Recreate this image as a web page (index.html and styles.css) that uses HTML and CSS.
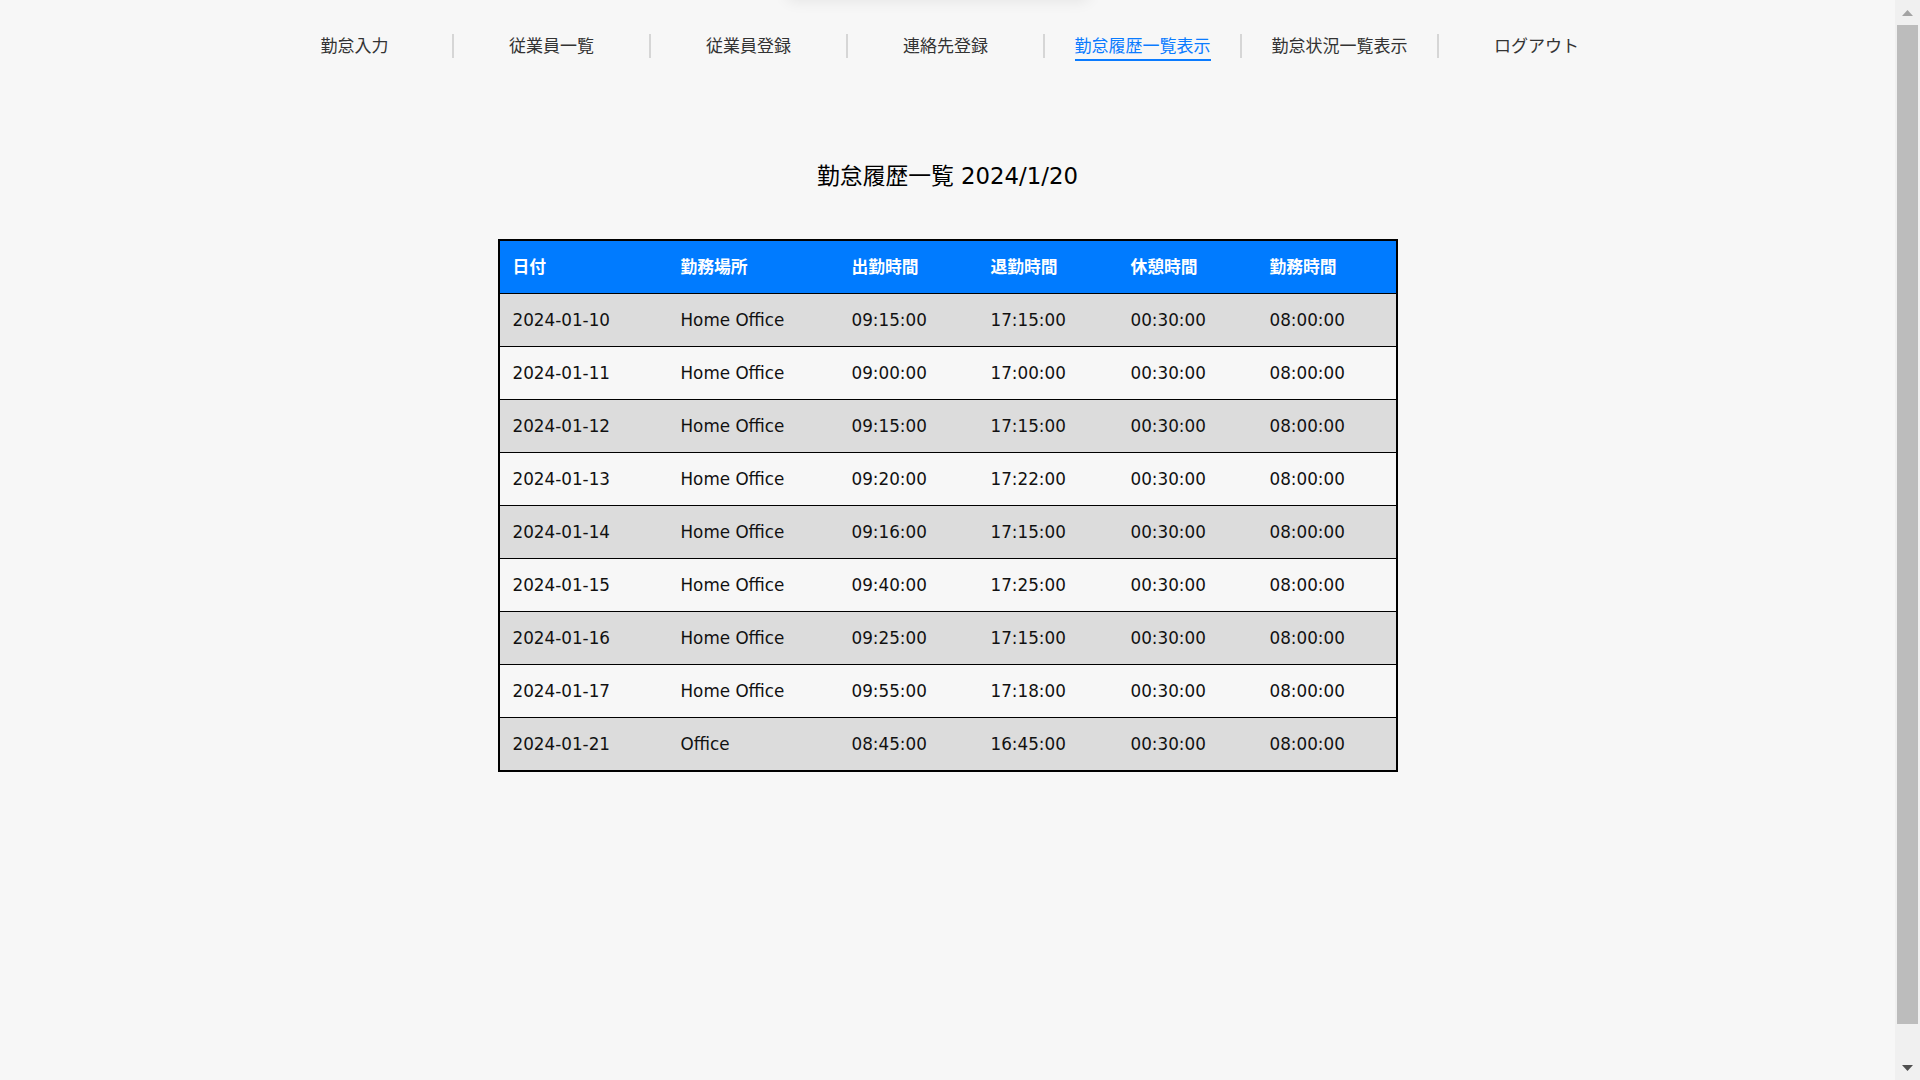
FILE: index.html
```html
<!DOCTYPE html>
<html lang="ja">
<head>
<meta charset="utf-8">
<title>勤怠履歴一覧</title>
<link rel="stylesheet" href="styles.css">
</head>
<body>
<div class="page">
  <div class="top-shadow"></div>
  <nav class="nav">
    <ul class="nav-list">
      <li class="nav-item"><a class="nav-link" href="#">勤怠入力</a></li>
      <li class="nav-item"><a class="nav-link" href="#">従業員一覧</a></li>
      <li class="nav-item"><a class="nav-link" href="#">従業員登録</a></li>
      <li class="nav-item"><a class="nav-link" href="#">連絡先登録</a></li>
      <li class="nav-item"><a class="nav-link active" href="#">勤怠履歴一覧表示</a></li>
      <li class="nav-item"><a class="nav-link" href="#">勤怠状況一覧表示</a></li>
      <li class="nav-item"><a class="nav-link" href="#">ログアウト</a></li>
    </ul>
  </nav>
  <main class="main">
    <h1 class="title">勤怠履歴一覧 2024/1/20</h1>
    <table class="history">
      <colgroup>
        <col class="c1"><col class="c2"><col class="c3"><col class="c4"><col class="c5"><col class="c6">
      </colgroup>
      <thead>
        <tr><th>日付</th><th>勤務場所</th><th>出勤時間</th><th>退勤時間</th><th>休憩時間</th><th>勤務時間</th></tr>
      </thead>
      <tbody>
        <tr><td>2024-01-10</td><td>Home Office</td><td>09:15:00</td><td>17:15:00</td><td>00:30:00</td><td>08:00:00</td></tr>
        <tr><td>2024-01-11</td><td>Home Office</td><td>09:00:00</td><td>17:00:00</td><td>00:30:00</td><td>08:00:00</td></tr>
        <tr><td>2024-01-12</td><td>Home Office</td><td>09:15:00</td><td>17:15:00</td><td>00:30:00</td><td>08:00:00</td></tr>
        <tr><td>2024-01-13</td><td>Home Office</td><td>09:20:00</td><td>17:22:00</td><td>00:30:00</td><td>08:00:00</td></tr>
        <tr><td>2024-01-14</td><td>Home Office</td><td>09:16:00</td><td>17:15:00</td><td>00:30:00</td><td>08:00:00</td></tr>
        <tr><td>2024-01-15</td><td>Home Office</td><td>09:40:00</td><td>17:25:00</td><td>00:30:00</td><td>08:00:00</td></tr>
        <tr><td>2024-01-16</td><td>Home Office</td><td>09:25:00</td><td>17:15:00</td><td>00:30:00</td><td>08:00:00</td></tr>
        <tr><td>2024-01-17</td><td>Home Office</td><td>09:55:00</td><td>17:18:00</td><td>00:30:00</td><td>08:00:00</td></tr>
        <tr><td>2024-01-21</td><td>Office</td><td>08:45:00</td><td>16:45:00</td><td>00:30:00</td><td>08:00:00</td></tr>
      </tbody>
    </table>
  </main>
</div>
<div class="scrollbar" aria-hidden="true">
  <div class="sb-btn">
    <svg width="11" height="6" viewBox="0 0 11 6"><polygon points="0,6 5.5,0 11,6" fill="#a3a3a3"/></svg>
  </div>
  <div class="sb-track"><div class="sb-thumb"></div></div>
  <div class="sb-btn">
    <svg width="11" height="6" viewBox="0 0 11 6"><polygon points="0,0 5.5,6 11,0" fill="#505050"/></svg>
  </div>
</div>
</body>
</html>
```
FILE: styles.css
```css
html {
  background: #f7f7f7;
}

body {
  margin: 0;
  background: #f7f7f7;
  font-family: "DejaVu Sans", "Noto Sans CJK JP", sans-serif;
  color: #111;
  overflow: hidden;
}

.page {
  position: relative;
  margin-right: 25px;
  min-height: 1080px;
}

.top-shadow {
  position: absolute;
  top: -30px;
  left: 50%;
  width: 300px;
  margin-left: -160px;
  height: 30px;
  box-shadow: 0 0 16px rgba(0, 0, 0, 0.09);
  background: #f7f7f7;
}

.nav {
  padding-top: 34px;
}

.nav-list {
  display: flex;
  justify-content: center;
  margin: 0;
  padding: 0 6px 0 0;
  list-style: none;
}

.nav-item {
  box-sizing: border-box;
  width: 197px;
  height: 24px;
  display: flex;
  justify-content: center;
  align-items: flex-start;
  border-left: 2px solid #d6d6d6;
}

.nav-item:first-child {
  border-left: 2px solid transparent;
}

.nav-link {
  display: block;
  font-size: 17px;
  line-height: 24px;
  color: #333;
  text-decoration: none;
  padding-bottom: 1px;
  border-bottom: 2px solid transparent;
}

.nav-link.active {
  color: #0a7bff;
  border-bottom-color: #0a7bff;
}

.main {
  margin-top: 103px;
}

.title {
  margin: 0;
  font-size: 22.8px;
  line-height: 30px;
  font-weight: normal;
  text-align: center;
  color: #000;
}

.history {
  margin: 48px auto 0;
  width: 900px;
  table-layout: fixed;
  border-collapse: separate;
  border-spacing: 0;
  border: 2px solid #000;
  font-size: 16.8px;
}

.c1 { width: 168px; }
.c2 { width: 171px; }
.c3 { width: 139px; }
.c4 { width: 140px; }
.c5 { width: 139px; }
.c6 { width: 139px; }

.history th,
.history td {
  text-align: left;
  padding: 16px 12px 16px 13px;
  line-height: 20px;
  white-space: nowrap;
}

.history th {
  background: #007bff;
  color: #fff;
  font-weight: bold;
  border-bottom: 1px solid #000;
}

.history td {
  color: #111;
  border-bottom: 1px solid #000;
}

.history tbody tr:last-child td {
  border-bottom: none;
}

.history tbody tr:nth-child(odd) td {
  background: #dcdcdc;
}

.history tbody tr:nth-child(even) td {
  background: #f7f7f7;
}

.scrollbar {
  position: fixed;
  top: 0;
  right: 0;
  width: 25px;
  height: 100vh;
  display: flex;
  flex-direction: column;
  background: #f0f0f0;
}

.sb-btn {
  height: 25px;
  display: flex;
  align-items: center;
  justify-content: center;
  flex: none;
}

.sb-track {
  flex: 1;
  padding: 0 2px;
}

.sb-thumb {
  height: 999px;
  background: #bcbcbc;
}
```
